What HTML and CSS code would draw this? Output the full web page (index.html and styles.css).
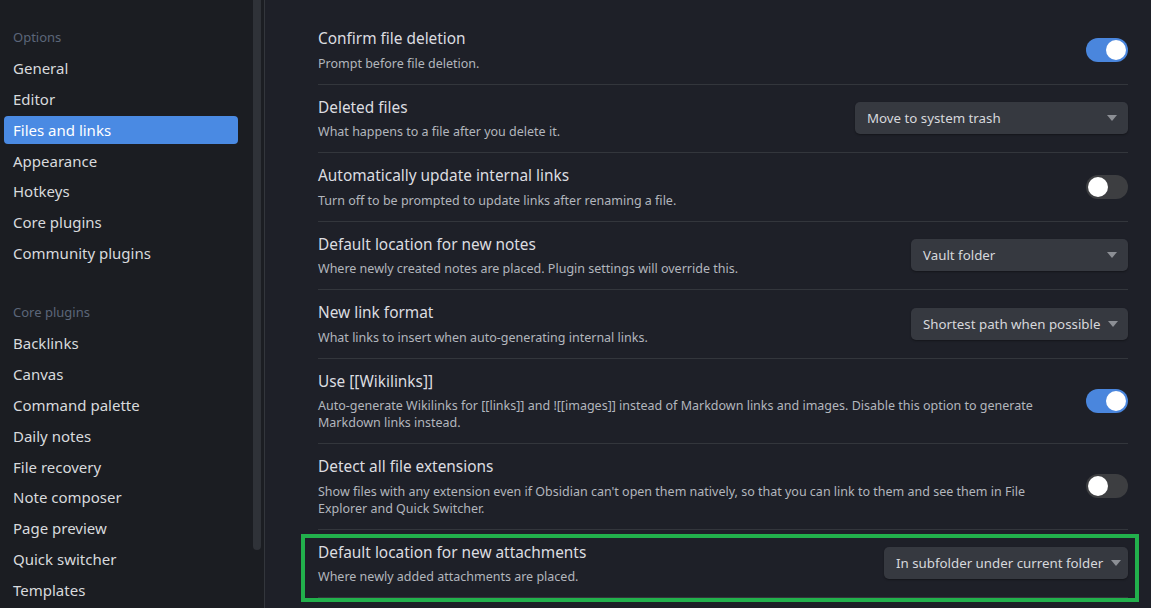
FILE: index.html
```html
<!DOCTYPE html>
<html lang="en">
<head>
<meta charset="utf-8">
<title>Settings - Files and links</title>
<link rel="stylesheet" href="styles.css">
</head>
<body>
<div class="app">
  <nav class="sidebar">
    <div class="nav-scroll">
      <div class="group">
        <div class="group-title">Options</div>
        <div class="nav-item">General</div>
        <div class="nav-item">Editor</div>
        <div class="nav-item active">Files and links</div>
        <div class="nav-item">Appearance</div>
        <div class="nav-item">Hotkeys</div>
        <div class="nav-item">Core plugins</div>
        <div class="nav-item">Community plugins</div>
      </div>
      <div class="group">
        <div class="group-title">Core plugins</div>
        <div class="nav-item">Backlinks</div>
        <div class="nav-item">Canvas</div>
        <div class="nav-item">Command palette</div>
        <div class="nav-item">Daily notes</div>
        <div class="nav-item">File recovery</div>
        <div class="nav-item">Note composer</div>
        <div class="nav-item">Page preview</div>
        <div class="nav-item">Quick switcher</div>
        <div class="nav-item">Templates</div>
      </div>
    </div>
    <div class="scrollbar"></div>
  </nav>
  <main class="content">
    <div class="setting first">
      <div class="info">
        <div class="name">Confirm file deletion</div>
        <div class="desc">Prompt before file deletion.</div>
      </div>
      <div class="control"><div class="toggle on"><span class="knob"></span></div></div>
    </div>
    <div class="setting">
      <div class="info">
        <div class="name">Deleted files</div>
        <div class="desc">What happens to a file after you delete it.</div>
      </div>
      <div class="control"><div class="dropdown w-trash"><span>Move to system trash</span><span class="caret"></span></div></div>
    </div>
    <div class="setting">
      <div class="info">
        <div class="name">Automatically update internal links</div>
        <div class="desc">Turn off to be prompted to update links after renaming a file.</div>
      </div>
      <div class="control"><div class="toggle"><span class="knob"></span></div></div>
    </div>
    <div class="setting">
      <div class="info">
        <div class="name">Default location for new notes</div>
        <div class="desc">Where newly created notes are placed. Plugin settings will override this.</div>
      </div>
      <div class="control"><div class="dropdown w-mid"><span>Vault folder</span><span class="caret"></span></div></div>
    </div>
    <div class="setting">
      <div class="info">
        <div class="name">New link format</div>
        <div class="desc">What links to insert when auto-generating internal links.</div>
      </div>
      <div class="control"><div class="dropdown w-mid"><span>Shortest path when possible</span><span class="caret"></span></div></div>
    </div>
    <div class="setting">
      <div class="info">
        <div class="name">Use [[Wikilinks]]</div>
        <div class="desc">Auto-generate Wikilinks for [[links]] and ![[images]] instead of Markdown links and images. Disable this option to generate Markdown links instead.</div>
      </div>
      <div class="control"><div class="toggle on"><span class="knob"></span></div></div>
    </div>
    <div class="setting">
      <div class="info">
        <div class="name">Detect all file extensions</div>
        <div class="desc">Show files with any extension even if Obsidian can't open them natively, so that you can link to them and see them in File Explorer and Quick Switcher.</div>
      </div>
      <div class="control"><div class="toggle"><span class="knob"></span></div></div>
    </div>
    <div class="setting highlighted">
      <div class="info">
        <div class="name">Default location for new attachments</div>
        <div class="desc">Where newly added attachments are placed.</div>
      </div>
      <div class="control"><div class="dropdown w-attach"><span>In subfolder under current folder</span><span class="caret"></span></div></div>
    </div>
  </main>
</div>
</body>
</html>
```

FILE: styles.css
```css
* { box-sizing: border-box; }
html, body { margin: 0; padding: 0; height: 100%; }
body {
  background: #1e2028;
  font-family: "Noto Sans", "Open Sans", sans-serif;
  overflow: hidden;
}
.app {
  display: flex;
  height: 608px;
}
.sidebar {
  width: 265px;
  flex: 0 0 265px;
  background: #1b1d22;
  border-right: 1px solid #33363c;
  display: flex;
  position: relative;
}
.nav-scroll {
  flex: 1;
  padding: 23px 0 0 4px;
}
.scrollbar {
  width: 8px;
  height: 550px;
  margin: 0 3px 0 0;
  background: #2f3238;
  border-radius: 0 0 4px 4px;
  flex: 0 0 8px;
}
.group + .group { margin-top: 31px; }
.group-title {
  height: 28px;
  margin-bottom: 2.875px;
  line-height: 28px;
  padding-left: 9px;
  font-size: 13px;
  color: #5b6679;
}
.nav-item {
  height: 28px;
  margin-bottom: 2.875px;
  line-height: 28px;
  padding-left: 9px;
  width: 234px;
  font-size: 15px;
  color: #d8dadd;
  border-radius: 4px;
  white-space: nowrap;
}
.nav-item.active {
  background: #4a8ae3;
  color: #ffffff;
}
.content {
  flex: 1;
  padding: 16px 23px 0 53px;
}
.setting {
  display: flex;
  align-items: center;
  padding: 12px 0;
  border-top: 1px solid #33363c;
  position: relative;
}
.setting.first { border-top: none; }
.setting.highlighted { border-bottom: 1px solid #33363c; }
.setting.highlighted::after {
  content: "";
  position: absolute;
  left: -17px;
  right: -11px;
  top: 4px;
  bottom: -5px;
  border: 4px solid #22b14c;
  pointer-events: none;
}
.info {
  flex: 1;
  min-width: 0;
  padding-right: 40px;
}
.name {
  font-size: 15.4px;
  line-height: 22px;
  color: #dcdde0;
}
.desc {
  margin-top: 4.5px;
  font-size: 12.5px;
  line-height: 17px;
  color: #b2b6bd;
}
.control {
  flex: 0 0 auto;
  display: flex;
  justify-content: flex-end;
}
.toggle {
  width: 42px;
  height: 24px;
  border-radius: 12px;
  background: #3d3e41;
  display: flex;
  align-items: center;
  padding: 0 2px;
}
.toggle .knob {
  width: 20px;
  height: 20px;
  border-radius: 50%;
  background: #ffffff;
}
.toggle.on {
  background: #4a86dd;
  justify-content: flex-end;
}
.dropdown {
  height: 32px;
  border-radius: 5px;
  background: #363940;
  box-shadow: 0 1px 2px rgba(0,0,0,0.35);
  display: flex;
  align-items: center;
  justify-content: space-between;
  padding: 0 11px 0 12px;
  font-size: 13.3px;
  color: #d6d8dc;
  white-space: nowrap;
}
.w-trash { width: 273px; }
.w-mid { width: 217px; }
.w-attach { width: 244px; }
.caret {
  width: 0;
  height: 0;
  border-left: 5px solid transparent;
  border-right: 5px solid transparent;
  border-top: 6px solid #8c8f95;
  margin-left: 8px;
}
```
